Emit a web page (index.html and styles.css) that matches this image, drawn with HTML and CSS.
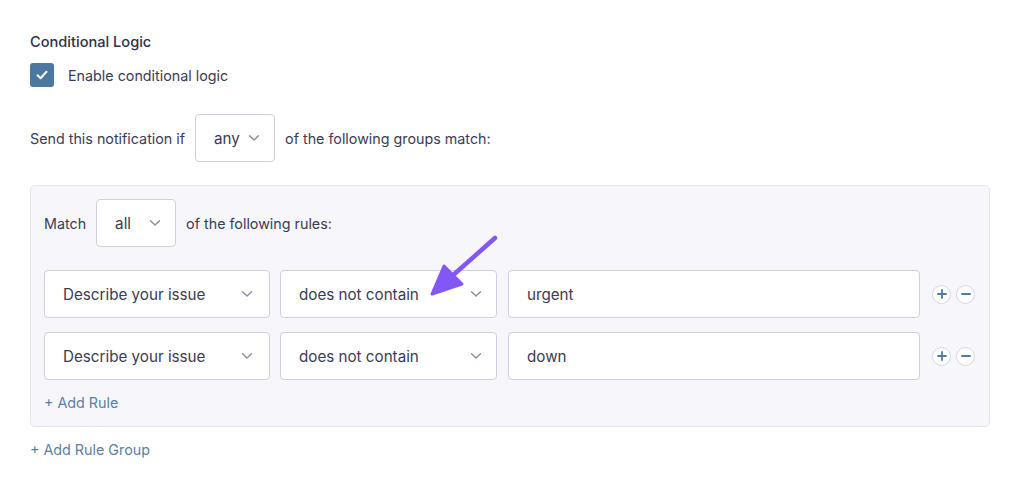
FILE: index.html
```html
<!DOCTYPE html>
<html lang="en">
<head>
    <meta charset="utf-8">
    <meta name="viewport" content="width=device-width, initial-scale=1.0">
    <link rel="stylesheet" href="styles.css">
</head>
<body>

<div class="page">
    <!-- cabeçalho da seção -->
    <h3 class="section-title">Conditional Logic</h3>

    <label class="check-row">
        <span class="checkbox">
            <svg width="14" height="14" viewBox="0 0 14 14"><path d="M2.5 7.3 L5.6 10.2 L11.5 3.8" fill="none" stroke="#fff" stroke-width="2" stroke-linecap="round" stroke-linejoin="round"/></svg>
        </span>
        Enable conditional logic
    </label>

    <div class="sentence">
        <span>Send this notification if</span>
        <div class="select select-small">
            <span>any</span>
            <svg class="chevron" width="12" height="8" viewBox="0 0 12 8"><path d="M1.5 1.8 L6 6 L10.5 1.8" fill="none" stroke="#8b8ba6" stroke-width="1.4" stroke-linecap="round" stroke-linejoin="round"/></svg>
        </div>
        <span>of the following groups match:</span>
    </div>

    <!-- grupo de regras -->
    <div class="group">
        <div class="sentence group-head">
            <span>Match</span>
            <div class="select select-small">
                <span>all</span>
                <svg class="chevron" width="12" height="8" viewBox="0 0 12 8"><path d="M1.5 1.8 L6 6 L10.5 1.8" fill="none" stroke="#8b8ba6" stroke-width="1.4" stroke-linecap="round" stroke-linejoin="round"/></svg>
            </div>
            <span>of the following rules:</span>
        </div>

        <div class="rule">
            <div class="select select-field">
                <span>Describe your issue</span>
                <svg class="chevron" width="12" height="8" viewBox="0 0 12 8"><path d="M1.5 1.8 L6 6 L10.5 1.8" fill="none" stroke="#8b8ba6" stroke-width="1.4" stroke-linecap="round" stroke-linejoin="round"/></svg>
            </div>
            <div class="select select-op">
                <span>does not contain</span>
                <svg class="chevron" width="12" height="8" viewBox="0 0 12 8"><path d="M1.5 1.8 L6 6 L10.5 1.8" fill="none" stroke="#8b8ba6" stroke-width="1.4" stroke-linecap="round" stroke-linejoin="round"/></svg>
            </div>
            <div class="value">urgent</div>
            <div class="rule-actions">
                <span class="round-btn">
                    <svg width="10" height="10" viewBox="0 0 10 10"><path d="M5 1 V9 M1 5 H9" stroke="#4f7aa3" stroke-width="1.8" stroke-linecap="round"/></svg>
                </span>
                <span class="round-btn">
                    <svg width="10" height="10" viewBox="0 0 10 10"><path d="M1 5 H9" stroke="#4f7aa3" stroke-width="1.8" stroke-linecap="round"/></svg>
                </span>
            </div>
            <svg class="arrow" width="80" height="70" viewBox="0 0 80 70">
                <path d="M66 4 L22 43" stroke="#8257f5" stroke-width="4.5" stroke-linecap="round"/>
                <path d="M3 60 L15 32 L33 50 Z" fill="#8257f5" stroke="#8257f5" stroke-width="3" stroke-linejoin="round"/>
            </svg>
        </div>

        <div class="rule">
            <div class="select select-field">
                <span>Describe your issue</span>
                <svg class="chevron" width="12" height="8" viewBox="0 0 12 8"><path d="M1.5 1.8 L6 6 L10.5 1.8" fill="none" stroke="#8b8ba6" stroke-width="1.4" stroke-linecap="round" stroke-linejoin="round"/></svg>
            </div>
            <div class="select select-op">
                <span>does not contain</span>
                <svg class="chevron" width="12" height="8" viewBox="0 0 12 8"><path d="M1.5 1.8 L6 6 L10.5 1.8" fill="none" stroke="#8b8ba6" stroke-width="1.4" stroke-linecap="round" stroke-linejoin="round"/></svg>
            </div>
            <div class="value">down</div>
            <div class="rule-actions">
                <span class="round-btn">
                    <svg width="10" height="10" viewBox="0 0 10 10"><path d="M5 1 V9 M1 5 H9" stroke="#4f7aa3" stroke-width="1.8" stroke-linecap="round"/></svg>
                </span>
                <span class="round-btn">
                    <svg width="10" height="10" viewBox="0 0 10 10"><path d="M1 5 H9" stroke="#4f7aa3" stroke-width="1.8" stroke-linecap="round"/></svg>
                </span>
            </div>
        </div>

        <a class="add-link add-rule" href="#">+ Add Rule</a>
    </div>

    <a class="add-link add-group" href="#">+ Add Rule Group</a>
</div>

</body>
</html>
```

FILE: styles.css
```css
/* página */
body {
    margin: 0;
    background-color: #ffffff;
    font-family: Inter, "Noto Sans", sans-serif;
    font-size: 14.3px;
    color: #3b3b56;
}

.page {
    padding: 33px 34px 0 30px;
}

/* título */
.section-title {
    margin: 0;
    font-size: 14.6px;
    font-weight: 500;
    color: #2f2f45;
    line-height: 18px;
}

/* checkbox */
.check-row {
    display: flex;
    align-items: center;
    gap: 14px;
    margin-top: 12px;
    color: #3b3b56;
}

.checkbox {
    width: 24px;
    height: 24px;
    border-radius: 3px;
    background: #4c77a0;
    display: flex;
    align-items: center;
    justify-content: center;
}

/* frases com select */
.sentence {
    display: flex;
    align-items: center;
    gap: 10px;
    margin-top: 27px;
}

.select {
    box-sizing: border-box;
    height: 48px;
    border: 1px solid #cfcfe0;
    border-radius: 4px;
    background: #fff;
    display: flex;
    align-items: center;
    justify-content: space-between;
    color: #3b3b56;
    font-size: 15.2px;
}

.select-small {
    width: 80px;
    padding: 0 14px 0 18px;
}

.chevron {
    flex: none;
}

.select-field {
    width: 227px;
    padding: 0 16px 0 18px;
}

.select-op {
    width: 218px;
    padding: 0 14px 0 18px;
}

/* grupo */
.group {
    box-sizing: border-box;
    width: 960px;
    margin-top: 23px;
    padding: 13px 14px 14px 13px;
    border: 1px solid #e4e4ee;
    border-radius: 5px;
    background: #f7f7fb;
}

.group-head {
    margin-top: 0;
}

.rule {
    position: relative;
    display: flex;
    align-items: center;
    gap: 10px;
    margin-top: 23px;
}

.rule + .rule {
    margin-top: 14px;
}

.value {
    box-sizing: border-box;
    width: 414px;
    height: 48px;
    border: 1px solid #cfcfe0;
    border-radius: 4px;
    background: #fff;
    padding: 0 18px;
    display: flex;
    align-items: center;
    margin-left: 1px;
    font-size: 15.2px;
}

.rule-actions {
    display: flex;
    gap: 5px;
    margin-left: 2px;
}

.round-btn {
    width: 19px;
    height: 19px;
    box-sizing: border-box;
    border: 1px solid #d6d6e4;
    border-radius: 50%;
    background: #fff;
    display: flex;
    align-items: center;
    justify-content: center;
}

/* seta de destaque */
.arrow {
    position: absolute;
    left: 385px;
    top: -36px;
}

/* links */
.add-link {
    display: block;
    color: #5a80a6;
    text-decoration: none;
    line-height: 18px;
}

.add-rule {
    margin-top: 14px;
}

.add-group {
    margin-top: 14px;
}
```
